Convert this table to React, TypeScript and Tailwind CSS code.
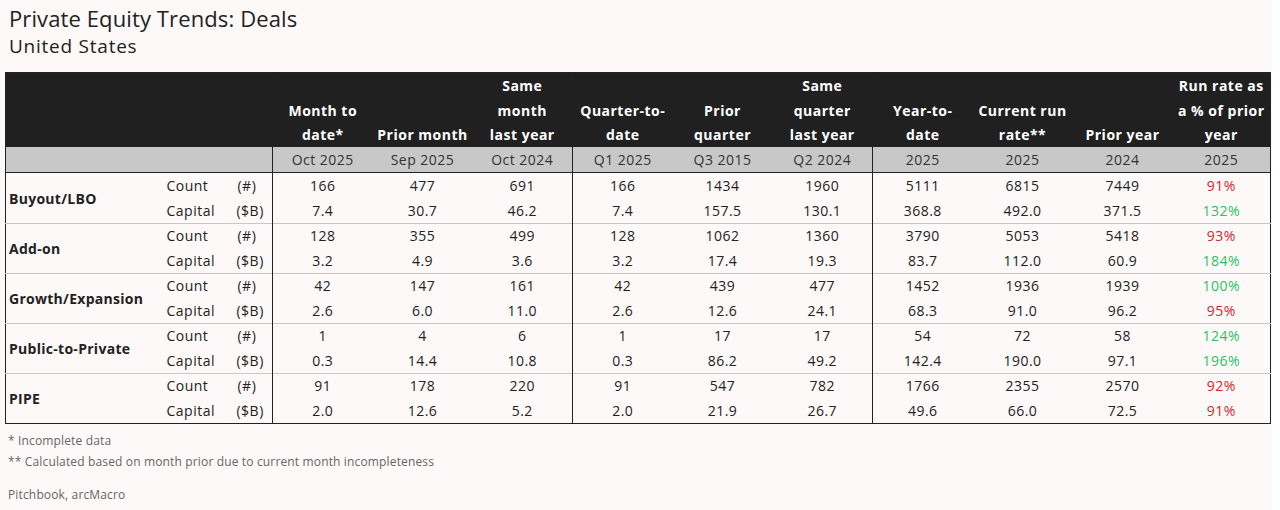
const cols = [
  { top: ["", "Month to", "date*"], sub: "Oct 2025", divider: true },
  { top: ["", "", "Prior month"], sub: "Sep 2025" },
  { top: ["Same", "month", "last year"], sub: "Oct 2024" },
  { top: ["", "Quarter-to-", "date"], sub: "Q1 2025", divider: true },
  { top: ["", "Prior", "quarter"], sub: "Q3 2015" },
  { top: ["Same", "quarter", "last year"], sub: "Q2 2024" },
  { top: ["", "Year-to-", "date"], sub: "2025", divider: true },
  { top: ["", "Current run", "rate**"], sub: "2025" },
  { top: ["", "", "Prior year"], sub: "2024" },
  { top: ["Run rate as", "a % of prior", "year"], sub: "2025" },
];

const groups = [
  {
    name: "Buyout/LBO",
    count: ["166", "477", "691", "166", "1434", "1960", "5111", "6815", "7449", "91%"],
    capital: ["7.4", "30.7", "46.2", "7.4", "157.5", "130.1", "368.8", "492.0", "371.5", "132%"],
  },
  {
    name: "Add-on",
    count: ["128", "355", "499", "128", "1062", "1360", "3790", "5053", "5418", "93%"],
    capital: ["3.2", "4.9", "3.6", "3.2", "17.4", "19.3", "83.7", "112.0", "60.9", "184%"],
  },
  {
    name: "Growth/Expansion",
    count: ["42", "147", "161", "42", "439", "477", "1452", "1936", "1939", "100%"],
    capital: ["2.6", "6.0", "11.0", "2.6", "12.6", "24.1", "68.3", "91.0", "96.2", "95%"],
  },
  {
    name: "Public-to-Private",
    count: ["1", "4", "6", "1", "17", "17", "54", "72", "58", "124%"],
    capital: ["0.3", "14.4", "10.8", "0.3", "86.2", "49.2", "142.4", "190.0", "97.1", "196%"],
  },
  {
    name: "PIPE",
    count: ["91", "178", "220", "91", "547", "782", "1766", "2355", "2570", "92%"],
    capital: ["2.0", "12.6", "5.2", "2.0", "21.9", "26.7", "49.6", "66.0", "72.5", "91%"],
  },
];

function pctColor(v: string) {
  return parseInt(v) >= 100 ? "text-[#2fbf64]" : "text-[#d9252b]";
}

function DataCells({ values }: { values: string[] }) {
  return (
    <>
      {values.map((v, i) => (
        <td
          key={i}
          className={`text-center ${cols[i].divider ? "border-l border-[#222]" : ""} ${i === 9 ? pctColor(v) : ""}`}
        >
          {v}
        </td>
      ))}
    </>
  );
}

export default function App() {
  return (
    <div className="bg-white min-h-[510px]">
      <div
        className="w-[1272px] h-[510px] bg-[#fdf9f8] text-[#222] pt-[4px]"
        style={{ fontFamily: '"Open Sans", Arial, sans-serif' }}
      >
        <div className="pl-[9px]">
          <h1 className="text-[22px] leading-[28px] font-medium tracking-[0.005em]">Private Equity Trends: Deals</h1>
          <p className="text-[19px] leading-[28px] tracking-[0.04em]">United States</p>
        </div>

        <table className="mt-[12px] ml-[5px] w-[1265px] table-fixed border-collapse border border-[#222] text-[14px] leading-[25px] tracking-[0.035em]">
          <colgroup>
            <col className="w-[158px]" />
            <col className="w-[68px]" />
            <col className="w-[41px]" />
            {cols.map((_, i) => (
              <col key={i} className={i === 9 ? "w-[98px]" : "w-[100px]"} />
            ))}
          </colgroup>
          <thead>
            <tr className="bg-[#202020] text-white font-bold">
              <th colSpan={3} className="h-[74px]" />
              {cols.map((c, i) => (
                <th
                  key={i}
                  className={`align-bottom text-center font-bold ${c.divider ? "border-l border-[#222]" : ""}`}
                >
                  <div className="h-[25px] whitespace-nowrap">{c.top[0]}</div>
                  <div className="h-[25px] whitespace-nowrap">{c.top[1]}</div>
                  <div className="h-[24px] leading-[24px] whitespace-nowrap">{c.top[2]}</div>
                </th>
              ))}
            </tr>
            <tr className="bg-[#c8c8c8] text-[#333] border-b border-[#222] leading-[25px]">
              <td colSpan={3} className="h-[25px]" />
              {cols.map((c, i) => (
                <td key={i} className={`text-center ${c.divider ? "border-l border-[#222]" : ""}`}>
                  {c.sub}
                </td>
              ))}
            </tr>
          </thead>
          <tbody>
            {groups.map((g, gi) => (
              <>
                <tr
                  key={g.name + "a"}
                  className={gi > 0 ? "border-t border-[#c8c8c8] leading-[24px]" : "leading-[25px]"}
                >
                  <td rowSpan={2} className="pl-[3px] font-bold whitespace-nowrap align-middle tracking-[0.02em]">
                    {g.name}
                  </td>
                  <td className={`${gi > 0 ? "h-[24px]" : "h-[25px]"} pl-[3px]`}>Count</td>
                  <td className="pl-[6px]">(#)</td>
                  <DataCells values={g.count} />
                </tr>
                <tr key={g.name + "b"}>
                  <td className="h-[25px] pl-[3px]">Capital</td>
                  <td className="pl-[5px]">($B)</td>
                  <DataCells values={g.capital} />
                </tr>
              </>
            ))}
          </tbody>
        </table>

        <div className="pl-[8px] text-[12px] text-[#666] mt-[6px] tracking-[0.0125em]">
          <p className="leading-[21px]">* Incomplete data</p>
          <p className="leading-[21px]">** Calculated based on month prior due to current month incompleteness</p>
          <p className="leading-[21px] mt-[12px]">Pitchbook, arcMacro</p>
        </div>
      </div>
    </div>
  );
}
